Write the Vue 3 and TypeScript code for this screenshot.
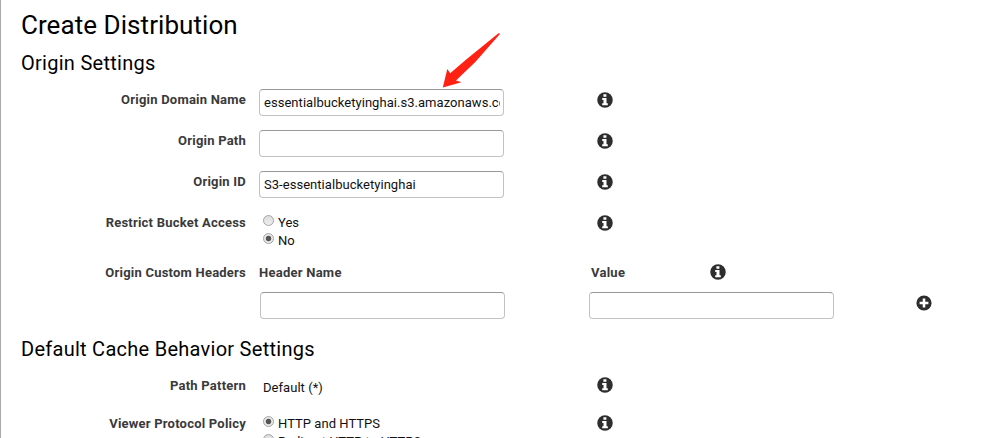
<script setup lang="ts">
import { ref } from 'vue'
import type { Ref } from 'vue'

interface TextRow {
  label: string
  model: Ref<string>
}

const domainName = ref('essentialbucketyinghai.s3.amazonaws.com')
const originPath = ref('')
const originId = ref('S3-essentialbucketyinghai')
const headerName = ref('')
const headerValue = ref('')
const restrict = ref('No')
const protocol = ref('HTTP and HTTPS')

const textRows: TextRow[] = [
  { label: 'Origin Domain Name', model: domainName },
  { label: 'Origin Path', model: originPath },
  { label: 'Origin ID', model: originId },
]
const restrictOptions = ['Yes', 'No']
const protocolOptions = ['HTTP and HTTPS', 'Redirect HTTP to HTTPS']
</script>

<template>
  <svg class="defs" width="0" height="0" aria-hidden="true">
    <symbol id="info" viewBox="0 0 16 16">
      <circle cx="8" cy="8" r="7.75" fill="#2d2d2d" />
      <path d="M6.4 2.3h3v2.4h-3zM5.2 6h4.3v5.2h1.3v2.1H5.2v-2.1h1.3V8H5.2z" fill="#fff" />
    </symbol>
    <symbol id="plus" viewBox="0 0 16 16">
      <circle cx="8" cy="8" r="7.6" fill="#2d2d2d" />
      <path d="M6.7 3.6h2.6v3.1h3.1v2.6H9.3v3.1H6.7V9.3H3.6V6.7h3.1z" fill="#fff" />
    </symbol>
  </svg>
  <main class="page">
    <h1>Create Distribution</h1>
    <section>
      <h2>Origin Settings</h2>
      <div v-for="row in textRows" :key="row.label" class="row">
        <label class="label">{{ row.label }}</label>
        <input v-model="row.model.value" class="field" type="text" :aria-label="row.label" />
        <svg class="icon"><use href="#info" /></svg>
      </div>
      <div class="row restrict">
        <span class="label">Restrict Bucket Access</span>
        <div class="options">
          <label v-for="option in restrictOptions" :key="option" class="option">
            <input v-model="restrict" type="radio" name="restrict" :value="option" />
            <span>{{ option }}</span>
          </label>
        </div>
        <svg class="icon"><use href="#info" /></svg>
      </div>
      <div class="headers">
        <span class="label">Origin Custom Headers</span>
        <span class="column">Header Name</span>
        <span class="column value">Value <svg class="icon"><use href="#info" /></svg></span>
        <input v-model="headerName" class="field name-field" type="text" aria-label="Header Name" />
        <input v-model="headerValue" class="field value-field" type="text" aria-label="Value" />
        <svg class="icon plus"><use href="#plus" /></svg>
      </div>
    </section>
    <section>
      <h2 class="second">Default Cache Behavior Settings</h2>
      <div class="row pattern">
        <span class="label">Path Pattern</span>
        <span class="static">Default (*)</span>
        <svg class="icon"><use href="#info" /></svg>
      </div>
      <div class="row">
        <span class="label">Viewer Protocol Policy</span>
        <div class="options">
          <label v-for="option in protocolOptions" :key="option" class="option">
            <input v-model="protocol" type="radio" name="protocol" :value="option" />
            <span>{{ option }}</span>
          </label>
        </div>
        <svg class="icon"><use href="#info" /></svg>
      </div>
    </section>
    <svg class="arrow" viewBox="0 0 60 58" aria-hidden="true">
      <path d="M55.5 .3Q57.4-.2 56.5 1.4L32.3 29 13 47.5 18.5 49.3-.2 54.5 4.3 36 7.2 40.3 23.5 26.2z" fill="#ff2113" />
    </svg>
  </main>
</template>

<style>
body {
  background: #fff;
  overflow: hidden;
}
</style>

<style scoped>
.defs {
  position: absolute;
}
.page {
  position: relative;
  box-sizing: border-box;
  height: 438px;
  overflow: hidden;
  padding: 9px 0 0 20px;
  border-left: 1px solid #aaa;
  font: 13px/18px Roboto, sans-serif;
  letter-spacing: 0.04px;
  color: #111;
}
h1,
h2 {
  margin: 0;
  font-weight: 400;
  color: #000;
}
h1 {
  font-size: 26px;
  line-height: 32px;
  letter-spacing: 0.06px;
}
h2 {
  height: 48px;
  padding-top: 8px;
  box-sizing: border-box;
  font-size: 20px;
  line-height: 28px;
  letter-spacing: 0.27px;
}
h2.second {
  height: 56px;
  padding-top: 16px;
}
.row {
  display: grid;
  grid-template-columns: 225px 245px 16px;
  column-gap: 13px;
  height: 41px;
}
.row > .icon {
  margin-left: 80px;
}
.row.restrict {
  height: 50px;
}
.row.pattern {
  height: 38px;
}
.label {
  line-height: 22px;
  text-align: right;
  font-weight: 700;
  letter-spacing: 0.22px;
  color: #3a3a3a;
}
.field {
  box-sizing: border-box;
  width: 245px;
  height: 27px;
  padding: 2px 3px 2px 4px;
  border: 1px solid #c3c3c3;
  border-top-color: #999;
  border-radius: 4px;
  outline: 0;
  background: #fff;
  font: inherit;
  letter-spacing: inherit;
  color: #111;
}
.icon {
  display: block;
  width: 16px;
  height: 16px;
  margin-top: 3px;
}
.pattern > .icon,
.second ~ .row > .icon {
  margin-top: 2px;
}
.options {
  padding: 2px 0 0 4px;
}
.option {
  display: flex;
  height: 18px;
}
.option input {
  appearance: none;
  box-sizing: border-box;
  flex: none;
  width: 11px;
  height: 11px;
  margin: 1px 4px 0 0;
  border: 1px solid #a5a5a5;
  border-radius: 50%;
  background: linear-gradient(#ddd, #eee);
}
.option input:checked {
  background: radial-gradient(circle, #555 0 2.3px, #e8e8e8 3.2px);
}
.static {
  padding: 4px 0 0 4px;
}
.headers {
  display: grid;
  grid-template-columns: 225px 317px 311px 16px;
  grid-template-rows: 30px 27px;
  column-gap: 13px;
  height: 57px;
}
.column {
  line-height: 22px;
  font-weight: 700;
  letter-spacing: 0.25px;
  color: #3a3a3a;
}
.value {
  display: flex;
  justify-content: space-between;
  width: 135px;
  margin-left: 2px;
}
.headers .value .icon {
  margin-top: 2px;
}
.name-field {
  grid-column: 2;
  margin-left: 1px;
}
.value-field {
  grid-column: 3;
}
.plus {
  grid-column: 4;
  margin-left: 3px;
}
.arrow {
  position: absolute;
  left: 442px;
  top: 33px;
  width: 60px;
  height: 58px;
  overflow: visible;
}
</style>
